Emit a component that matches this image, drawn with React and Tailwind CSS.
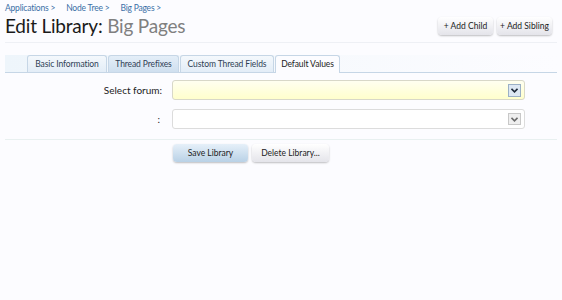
import React from "react";

function Chevron({ dark }) {
  return (
    <svg width="7" height="5" viewBox="0 0 7 5">
      <path d="M0.5 0.8 L3.5 3.8 L6.5 0.8" fill="none" stroke={dark ? "#1e2a3a" : "#6b6b6b"} strokeWidth="1.6" />
    </svg>
  );
}

export default function App() {
  const font = { fontFamily: "Lato, 'Open Sans', sans-serif" };
  return (
    <div className="w-[562px] h-[300px] bg-[#fcfcff] text-[#222]" style={font}>
      <div className="px-[5px] pt-[2px]">
        <div className="flex h-[12px] gap-[11px] text-[8.5px] leading-[12px] text-[#3a6fa6] tracking-[-0.2px]">
          <span>Applications &gt;</span>
          <span>Node Tree &gt;</span>
          <span>Big Pages &gt;</span>
        </div>
        <div className="flex items-start justify-between h-[24px]">
          <h1 className="text-[19px] leading-[24px] text-[#1a1a1a] tracking-[-0.2px]">
            Edit Library: <span className="text-[#808080]">Big Pages</span>
          </h1>
          <div className="flex gap-[4px] mt-[3px] mr-[5px]">
            <button className="w-[55px] h-[18px] rounded-[4px] text-[8.5px] text-[#222] bg-gradient-to-b from-[#ffffff] to-[#e4e4ea] shadow-[0_1px_2px_rgba(0,0,0,0.25)]">+ Add Child</button>
            <button className="w-[55px] h-[18px] rounded-[4px] text-[8.5px] text-[#222] bg-gradient-to-b from-[#ffffff] to-[#e4e4ea] shadow-[0_1px_2px_rgba(0,0,0,0.25)]">+ Add Sibling</button>
          </div>
        </div>
      </div>
      <div className="mx-[5px] mt-[4px] h-px bg-[#eef0f5]" />
      <div className="mx-[5px] mt-[12px] relative h-[18px] bg-gradient-to-r from-[#eef5fb] via-[#f6f9fd] to-[#fcfcff] border-b border-[#c6d6e6]">
        <div className="absolute left-[22px] bottom-[-1px] flex gap-[1px] text-[8.5px] tracking-[-0.1px]">
          <div className="w-[80px] h-[17px] flex items-center justify-center rounded-t-[3px] border border-b-0 border-[#c6d6e6] bg-gradient-to-b from-[#f4f8fc] to-[#e3edf7] text-[#2f3f55]">Basic Information</div>
          <div className="w-[71px] h-[17px] flex items-center justify-center rounded-t-[3px] border border-b-0 border-[#c6d6e6] bg-gradient-to-b from-[#e4eef8] to-[#cfdfef] text-[#2f3f55]">Thread Prefixes</div>
          <div className="w-[94px] h-[17px] flex items-center justify-center rounded-t-[3px] border border-b-0 border-[#c6d6e6] bg-gradient-to-b from-[#f4f8fc] to-[#e3edf7] text-[#2f3f55]">Custom Thread Fields</div>
          <div className="w-[65px] h-[18px] flex items-center justify-center rounded-t-[3px] border border-b-0 border-[#c6d6e6] bg-[#fcfcff] text-[#222]">Default Values</div>
        </div>
      </div>
      <div className="mt-[7px] flex flex-col gap-[9px]">
        <div className="flex items-center">
          <div className="w-[162px] text-right text-[10px] text-[#222]">Select forum:</div>
          <div className="ml-[10px] w-[353px] h-[20px] rounded-[3px] border border-[#d8d8c8] bg-gradient-to-b from-[#fffff0] to-[#ffffcc] flex items-center justify-end pr-[3px]">
            <div className="w-[13px] h-[13px] border border-[#9bb0c6] bg-[#dde8f3] flex items-center justify-center">
              <Chevron dark />
            </div>
          </div>
        </div>
        <div className="flex items-center">
          <div className="w-[162px] text-right text-[10px] text-[#222] pr-[2px]">:</div>
          <div className="ml-[10px] w-[353px] h-[20px] rounded-[3px] border border-[#dcdcdc] bg-white flex items-center justify-end pr-[3px]">
            <div className="w-[13px] h-[12px] border border-[#c8c8c8] bg-[#efefef] flex items-center justify-center">
              <Chevron />
            </div>
          </div>
        </div>
      </div>
      <div className="mx-[5px] mt-[10px] h-px bg-[#e8f0f0]" />
      <div className="mt-[4px] ml-[173px] flex gap-[4px]">
        <button className="w-[75px] h-[18px] rounded-[4px] text-[8.5px] text-[#222] bg-gradient-to-b from-[#e6f0f9] to-[#b9d1e6] shadow-[0_1px_2px_rgba(0,0,0,0.25)]">Save Library</button>
        <button className="w-[77px] h-[18px] rounded-[4px] text-[8.5px] text-[#222] bg-gradient-to-b from-[#ffffff] to-[#e4e4ea] shadow-[0_1px_2px_rgba(0,0,0,0.25)]">Delete Library...</button>
      </div>
    </div>
  );
}
